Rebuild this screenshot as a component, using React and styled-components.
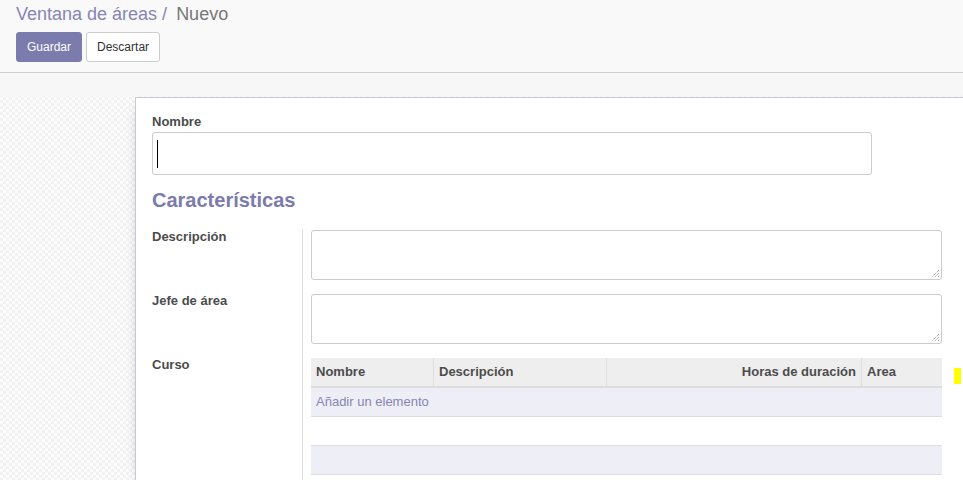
import React from "react";
import styled, { createGlobalStyle } from "styled-components";

const Global = createGlobalStyle`
  html, body { margin: 0; padding: 0; }
  body {
    font-family: "Liberation Sans", Arial, sans-serif;
    font-size: 13px;
    color: #4c4c4c;
    background: #fff;
    overflow: hidden;
  }
  * { box-sizing: border-box; }
`;

const Page = styled.div`
  width: 963px;
  height: 480px;
  display: flex;
  flex-direction: column;
  overflow: hidden;
`;

const ControlPanel = styled.div`
  height: 73px;
  flex: none;
  background: #f9f9f9;
  border-bottom: 1px solid #cfcfcf;
  padding: 3px 16px 0;
  display: flex;
  flex-direction: column;
  gap: 7px;
`;

const Breadcrumb = styled.div`
  font-size: 18px;
  line-height: 22px;
  display: flex;
  gap: 9px;
`;

const Crumb = styled.span`
  color: ${(p) => (p.$active ? "#777777" : "#8785b4")};
`;

const Buttons = styled.div`
  display: flex;
  gap: 4px;
`;

const Button = styled.button`
  font-family: inherit;
  font-size: 12px;
  height: 30px;
  padding: 0 10px;
  border-radius: 3px;
  border: 1px solid ${(p) => (p.$primary ? "#7c7bad" : "#cccccc")};
  background: ${(p) => (p.$primary ? "#7c7bad" : "#ffffff")};
  color: ${(p) => (p.$primary ? "#ffffff" : "#333333")};
`;

const SheetBg = styled.div`
  flex: 1;
  padding: 24px 0 0 135px;
  background:
    linear-gradient(#f7f7f7, #f7f7f7 22px, rgba(247,247,247,0) 24px),
    repeating-conic-gradient(#f2f2f2 0% 25%, #fcfcfc 0% 50%) 0 0 / 6px 6px;
  overflow: hidden;
`;

const Sheet = styled.div`
  position: relative;
  width: 900px;
  height: 100%;
  background: #fff;
  border: 1px solid #c8c8d3;
  border-right: none;
  border-bottom: none;
  box-shadow: -4px 4px 12px -8px rgba(0,0,0,0.25);
  padding: 15px 0 0 16px;
`;

const FieldLabel = styled.label`
  display: block;
  font-weight: bold;
  font-size: 13px;
  line-height: 18px;
  color: #4c4c4c;
`;

const TitleInput = styled.div`
  margin-top: 1px;
  width: 720px;
  height: 43px;
  border: 1px solid #cccccc;
  border-radius: 3px;
  padding: 7px 0 0 4px;
`;

const Caret = styled.div`
  width: 1px;
  height: 28px;
  background: #000;
`;

const Heading = styled.h2`
  margin: 12px 0 0;
  font-size: 20px;
  line-height: 26px;
  font-weight: bold;
  color: #7c7bad;
`;

const Group = styled.div`
  margin-top: 16px;
  display: grid;
  grid-template-columns: 151px 639px;
  row-gap: 13px;
`;

const LabelCell = styled.div`
  border-right: 1px solid #dddddd;
  margin-bottom: ${(p) => (p.$last ? "-30px" : "-13px")};
  font-weight: bold;
  line-height: 15px;
  color: #4c4c4c;
`;

const FieldCell = styled.div`
  padding: 1px 0 0 8px;
`;

const TextArea = styled.div`
  position: relative;
  width: 631px;
  height: 50px;
  border: 1px solid #cccccc;
  border-radius: 3px;
`;

const Grip = styled.svg`
  position: absolute;
  right: 1px;
  bottom: 1px;
`;

const Table = styled.div`
  width: 631px;
`;

const Row = styled.div`
  display: grid;
  grid-template-columns: 122px 173px 255px 81px;
  height: ${(p) => (p.$head ? "30px" : "29px")};
  background: ${(p) => (p.$head ? "#eeeeee" : p.$shade ? "#eeeef6" : "#ffffff")};
  border-bottom: ${(p) => (p.$head ? "2px solid #dddddd" : "1px solid #dddddd")};
`;

const HeadCell = styled.div`
  font-weight: bold;
  color: #4c4c4c;
  line-height: 28px;
  padding: 0 5px;
  text-align: ${(p) => (p.$right ? "right" : "left")};
  & + & { border-left: 1px solid #dddddd; }
`;

const AddCell = styled.div`
  grid-column: 1 / -1;
  line-height: 28px;
  padding: 0 5px;
  color: #8785b4;
`;

const Marker = styled.div`
  position: absolute;
  left: 818px;
  top: 270px;
  width: 7px;
  height: 16px;
  background: #ffff00;
`;

function ResizeGrip() {
  return (
    <Grip width="9" height="9" viewBox="0 0 9 9">
      <path d="M8 1 L1 8 M8 4 L4 8 M8 7 L7 8" stroke="#888" strokeWidth="1" strokeDasharray="1 1" />
    </Grip>
  );
}

export default function App() {
  return (
    <Page>
      <Global />
      <ControlPanel>
        <Breadcrumb>
          <Crumb>Ventana de áreas /</Crumb>
          <Crumb $active>Nuevo</Crumb>
        </Breadcrumb>
        <Buttons>
          <Button $primary>Guardar</Button>
          <Button>Descartar</Button>
        </Buttons>
      </ControlPanel>
      <SheetBg>
        <Sheet>
          <FieldLabel>Nombre</FieldLabel>
          <TitleInput>
            <Caret />
          </TitleInput>
          <Heading>Características</Heading>
          <Group>
            <LabelCell>Descripción</LabelCell>
            <FieldCell>
              <TextArea>
                <ResizeGrip />
              </TextArea>
            </FieldCell>
            <LabelCell>Jefe de área</LabelCell>
            <FieldCell>
              <TextArea>
                <ResizeGrip />
              </TextArea>
            </FieldCell>
            <LabelCell $last>Curso</LabelCell>
            <FieldCell>
              <Table>
                <Row $head>
                  <HeadCell>Nombre</HeadCell>
                  <HeadCell>Descripción</HeadCell>
                  <HeadCell $right>Horas de duración</HeadCell>
                  <HeadCell>Area</HeadCell>
                </Row>
                <Row $shade>
                  <AddCell>Añadir un elemento</AddCell>
                </Row>
                <Row />
                <Row $shade />
              </Table>
            </FieldCell>
          </Group>
          <Marker />
        </Sheet>
      </SheetBg>
    </Page>
  );
}
